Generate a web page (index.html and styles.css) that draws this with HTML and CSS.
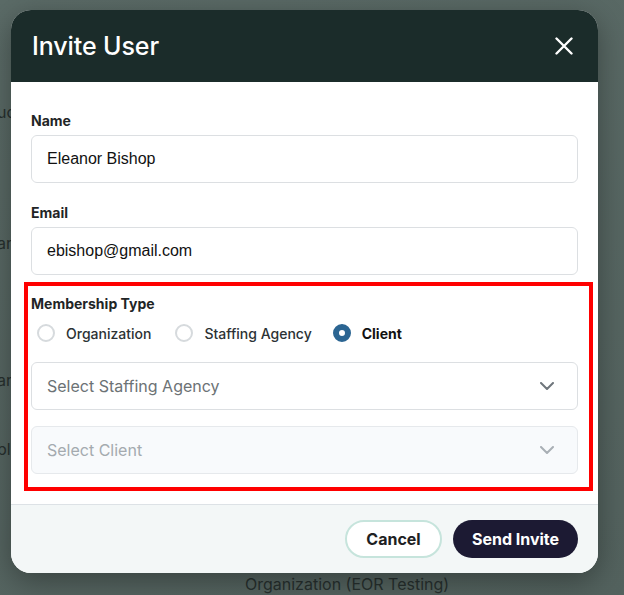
FILE: index.html
```html
<!DOCTYPE html>
<html lang="en">
<head>
  <meta charset="UTF-8">
  <title>Invite User</title>
  <link rel="stylesheet" href="styles.css">
</head>
<body>
  <!-- page behind the dialog -->
  <div class="backdrop">
    <div class="peek peek-1">uc</div>
    <div class="peek peek-2">ar</div>
    <div class="peek peek-3">ar</div>
    <div class="peek peek-4">ble</div>
    <div class="behind-org">Organization (EOR Testing)</div>
  </div>

  <div class="modal">
    <div class="modal-head">
      <h1>Invite User</h1>
      <button class="close" aria-label="Close">
        <svg width="18" height="18" viewBox="0 0 18 18"><path d="M1.5 1.5L16.5 16.5M16.5 1.5L1.5 16.5" stroke="#fff" stroke-width="2.4" stroke-linecap="round"/></svg>
      </button>
    </div>

    <div class="modal-body">
      <div class="field">
        <label for="name">Name</label>
        <input type="text" id="name" value="Eleanor Bishop">
      </div>
      <div class="field last">
        <label for="email">Email</label>
        <input type="text" id="email" value="ebishop@gmail.com">
      </div>

      <div class="membership">
        <div class="label">Membership Type</div>
        <div class="radios">
          <span class="radio"><i class="dot"></i>Organization</span>
          <span class="radio"><i class="dot"></i>Staffing Agency</span>
          <span class="radio checked"><i class="dot"></i>Client</span>
        </div>
        <div class="select">
          <span>Select Staffing Agency</span>
          <svg width="14" height="8" viewBox="0 0 14 8"><path d="M1 1l6 6 6-6" fill="none" stroke="#6f767c" stroke-width="2" stroke-linecap="round" stroke-linejoin="round"/></svg>
        </div>
        <div class="select disabled">
          <span>Select Client</span>
          <svg width="14" height="8" viewBox="0 0 14 8"><path d="M1 1l6 6 6-6" fill="none" stroke="#a9afb5" stroke-width="2" stroke-linecap="round" stroke-linejoin="round"/></svg>
        </div>
      </div>
    </div>

    <div class="modal-foot">
      <button class="btn cancel">Cancel</button>
      <button class="btn send">Send Invite</button>
    </div>
  </div>
</body>
</html>
```

FILE: styles.css
```css
body {
  margin: 0;
  width: 624px;
  height: 595px;
  overflow: hidden;
  background: linear-gradient(160deg, #5b6b67, #53625e);
  font-family: Inter, "Liberation Sans", sans-serif;
  position: relative;
}
.backdrop {
  height: 595px;
  color: #27302e;
  font-size: 16px;
}
.peek {
  margin-left: -3px;
  line-height: 20px;
}
.peek-1 { padding-top: 102px; }
.peek-2 { margin-top: 111px; }
.peek-3 { margin-top: 117px; }
.peek-4 { margin-top: 49px; }
.behind-org {
  margin-top: 115px;
  padding-left: 245px;
  line-height: 20px;
}
.modal {
  position: absolute;
  top: 10px;
  left: 11px;
  width: 587px;
  height: 563px;
  border-radius: 20px;
  overflow: hidden;
  background: #fff;
  box-shadow: 0 8px 30px rgba(0, 0, 0, 0.35);
  display: flex;
  flex-direction: column;
}
.modal-head {
  background: #1b2c2a;
  height: 72px;
  display: flex;
  align-items: center;
  justify-content: space-between;
  padding: 0 25px 0 21px;
  flex-shrink: 0;
}
.modal-head h1 {
  margin: 0;
  color: #fff;
  font-size: 25px;
  font-weight: 500;
  letter-spacing: -0.1px;
}
.close {
  background: none;
  border: 0;
  padding: 0;
  display: flex;
}
.modal-body {
  padding: 30px 20px 12px;
  flex: 1;
}
.field {
  margin-bottom: 21px;
}
.field.last {
  margin-bottom: 7px;
}
label, .label {
  display: block;
  font-size: 14px;
  line-height: 18px;
  font-weight: 700;
  color: #1f2526;
  margin-bottom: 5px;
}
input {
  box-sizing: border-box;
  width: 100%;
  height: 48px;
  border: 1px solid #dcdfe2;
  border-radius: 6px;
  padding: 0 15px;
  font-family: "Liberation Sans", Arial, sans-serif;
  font-size: 16px;
  color: #111;
}
.membership {
  border: 4px solid #ff0000;
  margin: 0 -15px 0 -7px;
  padding: 9px 11px 13px 3px;
}
.membership .label {
  margin-bottom: 10px;
}
.radios {
  display: flex;
  gap: 24px;
  height: 20px;
  align-items: center;
  margin-bottom: 19px;
  padding-left: 6px;
  font-size: 14px;
  color: #2c3234;
  font-weight: 500;
}
.radio {
  display: flex;
  align-items: center;
  gap: 11px;
}
.dot {
  box-sizing: border-box;
  width: 18px;
  height: 18px;
  border-radius: 50%;
  border: 2px solid #d6dadd;
  background: #fff;
}
.radio.checked {
  font-weight: 700;
  color: #111;
  margin-left: -3px;
}
.radio.checked .dot {
  border: 6px solid #2b6592;
}
.select {
  box-sizing: border-box;
  height: 48px;
  border: 1px solid #dcdfe2;
  border-radius: 6px;
  padding: 0 23px 0 15px;
  display: flex;
  align-items: center;
  justify-content: space-between;
  font-size: 16px;
  color: #6c7275;
  margin-bottom: 16px;
}
.select:last-child {
  margin-bottom: 0;
}
.select.disabled {
  background: #f8fafc;
  border-color: #e6e9ec;
  color: #a4aaaf;
}
.modal-foot {
  background: #f3f7f7;
  border-top: 1px solid #dde2e6;
  height: 69px;
  box-sizing: border-box;
  padding: 15px 20px 0;
  display: flex;
  justify-content: flex-end;
  gap: 11px;
  flex-shrink: 0;
}
.btn {
  height: 38px;
  border-radius: 19px;
  font-family: Inter, "Liberation Sans", sans-serif;
  font-size: 16px;
  font-weight: 700;
  cursor: pointer;
}
.cancel {
  width: 97px;
  background: #fff;
  border: 2px solid #c6e4dc;
  color: #1d2122;
}
.send {
  width: 125px;
  background: #1c1a33;
  border: 0;
  color: #fff;
}
```
